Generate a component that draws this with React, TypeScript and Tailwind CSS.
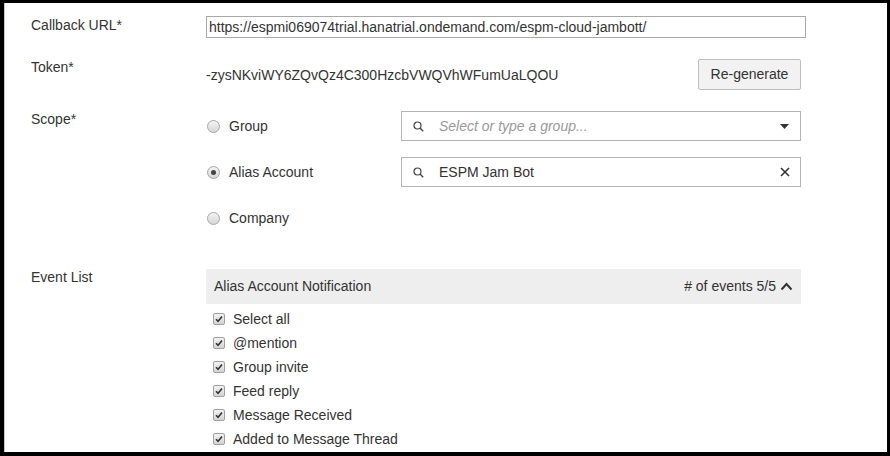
import React from "react";

const font = { fontFamily: '"Liberation Sans", Arial, sans-serif' };

function Radio({ checked }: { checked?: boolean }) {
  return (
    <span className="flex h-[13px] w-[13px] items-center justify-center rounded-full border border-[#a6a6a6] bg-gradient-to-b from-[#f4f4f4] to-[#d6d6d6]">
      {checked && <span className="h-[5px] w-[5px] rounded-full bg-[#444]" />}
    </span>
  );
}

function Check() {
  return (
    <span className="flex h-[12px] w-[12px] items-center justify-center rounded-[2px] border border-[#a0a0a0] bg-gradient-to-b from-[#f2f2f2] to-[#d4d4d4]">
      <svg width="8" height="8" viewBox="0 0 8 8">
        <path d="M1 4.2 L3.1 6.3 L7 1.6" fill="none" stroke="#333" strokeWidth="1.6" />
      </svg>
    </span>
  );
}

function SearchIcon() {
  return (
    <svg width="11" height="11" viewBox="0 0 11 11" className="shrink-0">
      <circle cx="4.5" cy="4.5" r="3.5" fill="none" stroke="#444" strokeWidth="1.2" />
      <path d="M7 7 L10.2 10.2" stroke="#444" strokeWidth="1.4" />
    </svg>
  );
}

export default function App() {
  const events = [
    "Select all",
    "@mention",
    "Group invite",
    "Feed reply",
    "Message Received",
    "Added to Message Thread",
  ];
  return (
    <div
      className="h-[456px] w-[890px] bg-black pb-[4px] pl-[4px] pr-[3px] pt-[3px] text-[14px] text-[#333]"
      style={font}
    >
      <div className="h-full overflow-hidden border-l border-[#c8c8c8] bg-white pl-[26px]">
        {/* Callback URL */}
        <div className="mt-[13px] flex items-start">
          <div className="w-[175px] pt-[1px] leading-4">Callback URL*</div>
          <div className="flex h-[22px] w-[600px] items-center border border-[#a9a9a9] pl-[2px] leading-4">
            https://espmi069074trial.hanatrial.ondemand.com/espm-cloud-jambott/
          </div>
        </div>

        {/* Token */}
        <div className="mt-[21px] flex items-start">
          <div className="w-[175px] leading-4">Token*</div>
          <div className="flex w-[595px] items-start justify-between">
            <div className="mt-[8px] leading-4">-zysNKviWY6ZQvQz4C300HzcbVWQVhWFumUaLQOU</div>
            <button className="flex h-[31px] w-[103px] items-center justify-center rounded-[2px] border border-[#bdbdbd] bg-[#f2f2f2] text-[14px] text-[#333]">
              Re-generate
            </button>
          </div>
        </div>

        {/* Scope */}
        <div className="mt-[21px] flex items-start">
          <div className="w-[175px] leading-4">Scope*</div>
          <div className="flex flex-col gap-[16px]">
            <div className="flex h-[30px] items-center">
              <div className="flex w-[195px] items-center gap-[9px] pl-[1px] pt-[1px]">
                <Radio />
                <span>Group</span>
              </div>
              <div className="flex h-[30px] w-[400px] items-center border border-[#b4b4b4] pl-[11px] pr-[11px]">
                <SearchIcon />
                <span className="ml-[15px] flex-1 italic text-[#999]">Select or type a group...</span>
                <svg width="9" height="5" viewBox="0 0 9 5">
                  <path d="M0 0 L9 0 L4.5 5 Z" fill="#333" />
                </svg>
              </div>
            </div>
            <div className="flex h-[30px] items-center">
              <div className="flex w-[195px] items-center gap-[9px] pl-[1px] pt-[1px]">
                <Radio checked />
                <span>Alias Account</span>
              </div>
              <div className="flex h-[30px] w-[400px] items-center border border-[#b4b4b4] pl-[11px] pr-[10px]">
                <SearchIcon />
                <span className="ml-[15px] flex-1">ESPM Jam Bot</span>
                <svg width="10" height="10" viewBox="0 0 10 10">
                  <path d="M1 1 L9 9 M9 1 L1 9" stroke="#333" strokeWidth="1.6" />
                </svg>
              </div>
            </div>
            <div className="flex h-[30px] items-center">
              <div className="flex w-[195px] items-center gap-[9px] pl-[1px] pt-[1px]">
                <Radio />
                <span>Company</span>
              </div>
            </div>
          </div>
        </div>

        {/* Event list */}
        <div className="mt-[36px] flex items-start">
          <div className="w-[175px] leading-4">Event List</div>
          <div className="w-[595px]">
            <div className="flex h-[35px] items-center justify-between bg-[#eeeeee] pl-[8px] pr-[8px]">
              <span>Alias Account Notification</span>
              <span className="flex items-center gap-[4px]">
                # of events 5/5
                <svg width="13" height="9" viewBox="0 0 13 9">
                  <path d="M1.5 7.5 L6.5 2 L11.5 7.5" fill="none" stroke="#333" strokeWidth="2" />
                </svg>
              </span>
            </div>
            <div className="mt-[3px] flex flex-col">
              {events.map((e) => (
                <div key={e} className="flex h-[24px] items-center gap-[8px] pl-[7px]">
                  <Check />
                  <span>{e}</span>
                </div>
              ))}
            </div>
          </div>
        </div>
      </div>
    </div>
  );
}
